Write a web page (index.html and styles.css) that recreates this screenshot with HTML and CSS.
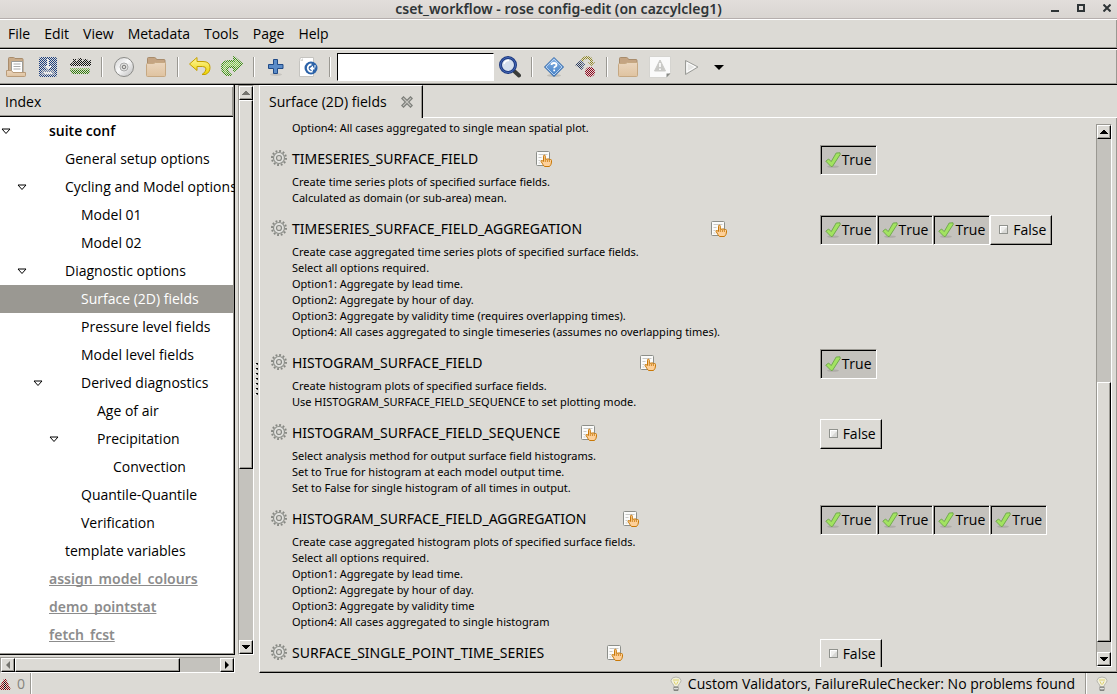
FILE: index.html
```
<!DOCTYPE html>
<html lang="en">
<head>
<meta charset="utf-8">
<title>cset_workflow - rose config-edit (on cazcylcleg1)</title>
<link rel="stylesheet" href="styles.css">
</head>
<body>
<svg class="defs" width="0" height="0" aria-hidden="true">
  <defs>
    <pattern id="dither" width="2" height="2" patternUnits="userSpaceOnUse"><rect width="1" height="1" fill="#dcdad5"/><rect x="1" y="1" width="1" height="1" fill="#dcdad5"/></pattern>
    <linearGradient id="fold" x2="0" y2="1"><stop offset="0" stop-color="#ead5bd"/><stop offset="1" stop-color="#dfc3a0"/></linearGradient>
    <linearGradient id="gold" x2="0" y2="1"><stop offset="0" stop-color="#fff6a0"/><stop offset="1" stop-color="#edd400"/></linearGradient>
    <linearGradient id="blue" x2="0" y2="1"><stop offset="0" stop-color="#8db6e6"/><stop offset="1" stop-color="#3f7dc4"/></linearGradient>
    <linearGradient id="disc" x2="1" y2="1"><stop offset="0" stop-color="#cfcfcf"/><stop offset=".45" stop-color="#fafafa"/><stop offset="1" stop-color="#b9b9b9"/></linearGradient>
  </defs>
  <symbol id="i-folder" viewBox="0 0 22 22">
    <path d="M2.500 18V2.500q0-1 1-1h6q1 0 1.500 1l.5 1h7.500q1 0 1 1V18z" fill="#c4a482" stroke="#a88c6c"/>
    <path d="M1.500 19.500V8.500q0-1 1-1h6l2-1h9q1 0 1 1v12q0 1-1 1h-17q-1 0-1-1z" fill="url(#fold)" stroke="#c6a882"/>
  </symbol>
  <symbol id="i-gear" viewBox="0 0 16 16">
    <circle cx="8" cy="8" r="7" fill="none" stroke="#868883" stroke-width="2" stroke-dasharray="1.830 1.830"/>
    <circle cx="8" cy="8" r="5.500" fill="#e0e0dd" stroke="#8d8f8a" stroke-width="1.200"/>
    <circle cx="8" cy="8" r="2.500" fill="#dcdad5" stroke="#868883" stroke-width="1.200"/>
  </symbol>
  <symbol id="i-hint" viewBox="0 0 16 16">
    <rect x=".5" y=".5" width="13" height="14" rx="1" fill="#fbfbfa" stroke="#8d8f8a"/>
    <path d="M2.500 3.500h9M2.500 6.500h3M2.500 9.500h2M2.500 12h2" stroke="#c9c9c6"/>
    <path d="M8.500 15.500h5q2-2 2-4.500V9.500q0-1-1-1t-1.200.8q-.2-1.600-1.200-1.600t-1.200 1q-.2-1-1.200-1-.4 0-.4.200V5.200q0-1-.9-1t-.9 1V10.500L6 9.500q-1-.2-1 .8l2 3.400z" fill="#fdd09a" stroke="#c87808"/>
    <path d="M9.300 8v3M11.400 9v2M13.400 9.500v1.500" stroke="#c87808" stroke-width=".8"/>
  </symbol>
  <symbol id="i-check" viewBox="0 0 16 16">
    <ellipse cx="8" cy="14.600" rx="6" ry="1.200" fill="#aeaca7"/>
    <path d="M.8 9.200L3.600 7l2.600 2.600L11.200 1l3.800-.2.200 1.600L7.500 14.400 6 14.500z" fill="#a2e360" stroke="#72a850" stroke-linejoin="round"/>
  </symbol>
  <symbol id="i-box" viewBox="0 0 16 16">
    <rect x="4.500" y="3.500" width="8" height="8" fill="#eeeeec" stroke="#90928d"/>
    <rect x="5.500" y="4.500" width="6" height="6" fill="none" stroke="#fff"/>
    <path d="M6 11l6-6v6z" fill="#d8d8d5"/>
  </symbol>
  <symbol id="i-down" viewBox="0 0 8 4"><path d="M0 0h8v1H7v1H6v1H5v1H3V3H2V2H1V1H0z" fill="currentColor"/></symbol>
  <symbol id="i-open" viewBox="0 0 10 7"><path d="M1 1h8L5 5.500z" fill="#fff" stroke="#000"/></symbol>
  <symbol id="i-bulb" viewBox="0 0 12 16">
    <path d="M4 11Q4 9 2.500 7.500 1 6 1 4.500 1.500 1 6 1t5 3.500Q11 6 9.500 7.500 8 9 8 11z" fill="#f3f1dc" stroke="#b5b5ae"/>
    <path d="M3 4h6M4 5.500l1.500 3M8 5.500l-1.500 3" stroke="#dcd06c" fill="none"/>
    <path d="M4 11h4v3.500H4z" fill="#a5a6a2" stroke="#82837f"/><path d="M4 12.500h4" stroke="#dfdfdc"/>
  </symbol>
</svg>

<div class="window">
  <header class="titlebar">
    <h1 class="title">cset_workflow - rose config-edit (on cazcylcleg1)</h1>
    <div class="controls">
      <button class="ctl" aria-label="Minimize"><svg width="8" height="8"><path d="M0 6h8v2H0z" fill="#2e3436"/></svg></button>
      <button class="ctl" aria-label="Maximize"><svg width="8" height="8"><path d="M1 1h6v6H1z" fill="none" stroke="#2e3436" stroke-width="2"/></svg></button>
      <button class="ctl" aria-label="Close"><svg width="8" height="8"><path d="M.5.5l7 7M7.500.5l-7 7" stroke="#2e3436" stroke-width="2"/></svg></button>
    </div>
  </header>

  <nav class="menubar">
    <button class="menu">File</button><button class="menu">Edit</button><button class="menu">View</button><button class="menu">Metadata</button><button class="menu">Tools</button><button class="menu">Page</button><button class="menu">Help</button>
  </nav>

  <div class="toolbar">
    <button class="tool" aria-label="Open"><svg width="22" height="22"><path d="M3.500 17V2.500q0-1 1-1h4q1 0 1.500 1h7q1 0 1 1V17z" fill="#c9ab89" stroke="#a88c6c"/><path d="M6.500 5.500h11v11h-11z" fill="#fff" stroke="#9b9b97"/><path d="M8.500 8h7M8.500 10.500h7M8.500 13h7" stroke="#aaa"/><path d="M1.500 14.500h5l1.500 2h12.500v3q0 1-1 1h-17q-1 0-1-1z" fill="url(#fold)" stroke="#b99b78"/></svg></button>
    <button class="tool" aria-label="Save"><svg width="22" height="22"><rect x="2" y="1" width="18" height="20" rx="2" fill="#1c3f80"/><path d="M5 14h12l1 5H4z" fill="#6f82a8"/><path d="M10 3h2v7h3l-4 4-4-4h3z" fill="#f2f4f8"/><path d="M7 16h8v2H7z" fill="#f2f4f8"/><rect width="22" height="22" fill="url(#dither)"/></svg></button>
    <button class="tool" aria-label="Check and save"><svg width="22" height="22"><path d="M1 10V8l3-2V3h3v3l3-4h3v4l2-3h3l1 2 3-1v6z" fill="#111"/><path d="M1 12h20v2H1z" fill="#7ab050"/><path d="M1 14h20l-1 4H3z" fill="#2f7c08"/><rect width="22" height="22" fill="url(#dither)"/></svg></button>
    <span class="sep"></span>
    <button class="tool" aria-label="Load"><svg width="22" height="22"><circle cx="11" cy="11" r="9.500" fill="url(#disc)" stroke="#8b8b88"/><circle cx="11" cy="11" r="4" fill="#e4e4e2" stroke="#aaa"/><circle cx="11" cy="11" r="1.800" fill="#dcdad5" stroke="#777"/></svg></button>
    <button class="tool" aria-label="Browse"><svg width="22" height="22"><use href="#i-folder"/></svg></button>
    <span class="sep"></span>
    <button class="tool" aria-label="Undo"><svg width="24" height="22"><path d="M1.500 8L9 1.500V5.500h6q7 0 7 6 0 5-4.500 7H14q4-2.500 4-5.500 0-2.500-3.500-2.500H9v4z" fill="url(#gold)" stroke="#c4a000" stroke-linejoin="round"/></svg></button>
    <button class="tool" aria-label="Redo"><svg width="24" height="22"><path d="M22 8L14 1v4H9q-7 0-7 6 0 6 5 8h4q-4-3-4-6 0-2 3-2h4v4z" fill="#7ed048" stroke="#3a9010" stroke-width="2" stroke-linejoin="round"/><rect width="24" height="22" fill="url(#dither)"/></svg></button>
    <span class="sep"></span>
    <button class="tool" aria-label="Add"><svg width="22" height="22"><ellipse cx="11" cy="18.500" rx="6" ry="1.500" fill="#c6c4bf"/><path d="M8.500 3.500h4v5h5.500v4h-5.500v5h-4v-5H3.500v-4h5z" fill="#5b8cc8" stroke="#204a87"/></svg></button>
    <button class="tool" aria-label="Revert"><svg width="22" height="22"><path d="M3.500 1.500h13v19h-14V4.500z" fill="#fff" stroke="#c5c4c0"/><path d="M3 5l3-3v3z" fill="#d5d5d2"/><circle cx="14" cy="12" r="6.500" fill="#2b62a8"/><path d="M14.500 8.500A3.600 3.600 0 1 0 15.500 15.500" fill="none" stroke="#fff" stroke-width="1.800"/><path d="M12.500 12.500l3.500-3v2h2.500V9h-1v4.500H16v2z" fill="#fff"/></svg></button>
    <span class="sep"></span>
    <input class="find" type="text" aria-label="Find">
    <button class="tool" aria-label="Search"><svg width="22" height="22"><path d="M14 14l6 5.500" stroke="#3a3c39" stroke-width="4" stroke-linecap="round"/><circle cx="9" cy="9" r="7.500" fill="#d5e0ee" stroke="#1d3a80" stroke-width="3"/><circle cx="9" cy="9" r="7.500" fill="none" stroke="#4468b8"/><path d="M5 8q1-4 5-3.500" stroke="#fff" stroke-width="1.500" fill="none"/></svg></button>
    <span class="sep"></span>
    <button class="tool" aria-label="Help"><svg width="22" height="22"><ellipse cx="11" cy="19.500" rx="7" ry="1.500" fill="#bfbdb8"/><path d="M11 1.500L20.500 11 11 20.500 1.500 11z" fill="url(#blue)" stroke="#2f66a8" stroke-linejoin="round"/><path d="M11 3L19 11l-8 8-8-8z" fill="none" stroke="#b5d0f0"/><path d="M8.500 9q0-2 2.500-2t2.500 2q0 1-1.500 1.700-.8.500-.8 1.500M11.200 13.500v1.800" fill="none" stroke="#fff" stroke-width="1.800"/></svg></button>
    <button class="tool" aria-label="Graph"><svg width="22" height="22"><path d="M0 9l6-5 4 4-3 6z" fill="#24365c"/><path d="M6 4l4 4-3 6z" fill="#50638a"/><path d="M6 4q2-4 6-4 6 0 6 6h2l-3.500 4L13 6h2q0-3-3-3-3 0-4 3z" fill="#8e8620"/><circle cx="15" cy="16" r="5" fill="#90001a"/><rect width="22" height="22" fill="url(#dither)"/></svg></button>
    <span class="sep narrow"></span>
    <button class="tool" aria-label="Browse output"><svg width="22" height="22"><use href="#i-folder"/></svg></button>
    <button class="tool" aria-label="View output"><svg width="22" height="22"><path d="M.5.5h21v16l-4 5h-17z" fill="#fafafa" stroke="#d5d4d0"/><path d="M17.500 21.500v-4h4z" fill="#888a85"/><path d="M11 4l5.500 11h-11z" fill="#c9c9c6" stroke="#c9c9c6" stroke-linejoin="round"/><path d="M11 7v4M11 12.500v1.500" stroke="#fff" stroke-width="1.600"/></svg></button>
    <button class="tool" aria-label="Run"><svg width="22" height="22"><path d="M4.500 4.500L17 11 4.500 18.500z" fill="#e6e6e4" stroke="#9b9c98" stroke-linejoin="round"/><path d="M6 6.500L14.500 11 6 16z" fill="none" stroke="#fff"/></svg></button>
    <button class="tool slim" aria-label="Run options"><svg width="10" height="5"><path d="M0 0h10L5 5z"/></svg></button>
  </div>

  <main class="body">
    <aside class="side">
      <section class="tree">
        <h2 class="tree-head">Index</h2>
        <ul class="rows">
          <li class="row d0"><svg class="exp" width="10" height="7"><use href="#i-open"/></svg><b class="name">suite conf</b></li>
          <li class="row d1"><span class="name">General setup options</span></li>
          <li class="row d1"><svg class="exp" width="10" height="7"><use href="#i-open"/></svg><span class="name">Cycling and Model options</span></li>
          <li class="row d2"><span class="name">Model 01</span></li>
          <li class="row d2"><span class="name">Model 02</span></li>
          <li class="row d1"><svg class="exp" width="10" height="7"><use href="#i-open"/></svg><span class="name">Diagnostic options</span></li>
          <li class="row d2 selected"><span class="name">Surface (2D) fields</span></li>
          <li class="row d2"><span class="name">Pressure level fields</span></li>
          <li class="row d2"><span class="name">Model level fields</span></li>
          <li class="row d2"><svg class="exp" width="10" height="7"><use href="#i-open"/></svg><span class="name">Derived diagnostics</span></li>
          <li class="row d3"><span class="name">Age of air</span></li>
          <li class="row d3"><svg class="exp" width="10" height="7"><use href="#i-open"/></svg><span class="name">Precipitation</span></li>
          <li class="row d4"><span class="name">Convection</span></li>
          <li class="row d2"><span class="name">Quantile-Quantile</span></li>
          <li class="row d2"><span class="name">Verification</span></li>
          <li class="row d1"><span class="name">template variables</span></li>
          <li class="row d0"><a class="name ignored" href="#assign">assign_model_colours</a></li>
          <li class="row d0"><a class="name ignored" href="#demo">demo_pointstat</a></li>
          <li class="row d0"><a class="name ignored" href="#fetch">fetch_fcst</a></li>
        </ul>
      </section>
      <div class="vbar">
        <button class="arrow off" aria-label="Scroll up"><svg class="up" width="8" height="4"><use href="#i-down"/></svg></button>
        <div class="thumb tree-thumb"></div><div class="gap"></div>
        <button class="arrow" aria-label="Scroll down"><svg width="8" height="4"><use href="#i-down"/></svg></button>
      </div>
      <div class="hbar">
        <button class="arrow off" aria-label="Scroll left"><svg width="4" height="8"><path d="M4 0v8L0 4z" fill="currentColor"/></svg></button>
        <div class="thumb wide-thumb"></div><div class="gap"></div>
        <button class="arrow" aria-label="Scroll right"><svg width="4" height="8"><path d="M0 0v8l4-4z" fill="currentColor"/></svg></button>
      </div>
    </aside>
    <div class="grip"><i></i><i></i><i></i><i></i><i></i><i></i><i></i></div>

    <section class="book">
      <div class="tabs">
        <div class="tab"><span>Surface (2D) fields</span><button class="close" aria-label="Close tab"><svg width="12" height="12"><path d="M2.500 2.500l7 7M9.500 2.500l-7 7" stroke="#7d7f7a" stroke-width="3.600" stroke-linecap="square"/><path d="M2.500 2.500l7 7M9.500 2.500l-7 7" stroke="#c4c3be" stroke-width="1.200" stroke-linecap="square"/></svg></button></div>
        <div class="tab-rest"></div>
      </div>
      <div class="page">
        <div class="view">
          <div class="list">
            <article class="setting cont"><div class="info"><p class="desc">Option4: All cases aggregated to single mean spatial plot.</p></div></article>

            <article class="setting">
              <svg class="gear" width="16" height="16"><use href="#i-gear"/></svg>
              <div class="info w-xs"><h3 class="head">TIMESERIES_SURFACE_FIELD <svg width="16" height="16"><use href="#i-hint"/></svg></h3>
              <p class="desc">Create time series plots of specified surface fields.<br>Calculated as domain (or sub-area) mean.</p></div>
              <div class="vals"><button class="val on" aria-pressed="true"><svg width="16" height="16"><use href="#i-check"/></svg>True</button></div>
            </article>

            <article class="setting">
              <svg class="gear" width="16" height="16"><use href="#i-gear"/></svg>
              <div class="info w-xl"><h3 class="head">TIMESERIES_SURFACE_FIELD_AGGREGATION <svg width="16" height="16"><use href="#i-hint"/></svg></h3>
              <p class="desc">Create case aggregated time series plots of specified surface fields.<br>Select all options required.<br>Option1: Aggregate by lead time.<br>Option2: Aggregate by hour of day.<br>Option3: Aggregate by validity time (requires overlapping times).<br>Option4: All cases aggregated to single timeseries (assumes no overlapping times).</p></div>
              <div class="vals"><button class="val on" aria-pressed="true"><svg width="16" height="16"><use href="#i-check"/></svg>True</button><button class="val on" aria-pressed="true"><svg width="16" height="16"><use href="#i-check"/></svg>True</button><button class="val on" aria-pressed="true"><svg width="16" height="16"><use href="#i-check"/></svg>True</button><button class="val" aria-pressed="false"><svg width="16" height="16"><use href="#i-box"/></svg>False</button></div>
            </article>

            <article class="setting">
              <svg class="gear" width="16" height="16"><use href="#i-gear"/></svg>
              <div class="info w-lg"><h3 class="head">HISTOGRAM_SURFACE_FIELD <svg width="16" height="16"><use href="#i-hint"/></svg></h3>
              <p class="desc">Create histogram plots of specified surface fields.<br>Use HISTOGRAM_SURFACE_FIELD_SEQUENCE to set plotting mode.</p></div>
              <div class="vals"><button class="val on" aria-pressed="true"><svg width="16" height="16"><use href="#i-check"/></svg>True</button></div>
            </article>

            <article class="setting">
              <svg class="gear" width="16" height="16"><use href="#i-gear"/></svg>
              <div class="info w-sm"><h3 class="head">HISTOGRAM_SURFACE_FIELD_SEQUENCE <svg width="16" height="16"><use href="#i-hint"/></svg></h3>
              <p class="desc">Select analysis method for output surface field histograms.<br>Set to True for histogram at each model output time.<br>Set to False for single histogram of all times in output.</p></div>
              <div class="vals"><button class="val" aria-pressed="false"><svg width="16" height="16"><use href="#i-box"/></svg>False</button></div>
            </article>

            <article class="setting">
              <svg class="gear" width="16" height="16"><use href="#i-gear"/></svg>
              <div class="info w-md"><h3 class="head">HISTOGRAM_SURFACE_FIELD_AGGREGATION <svg width="16" height="16"><use href="#i-hint"/></svg></h3>
              <p class="desc">Create case aggregated histogram plots of specified surface fields.<br>Select all options required.<br>Option1: Aggregate by lead time.<br>Option2: Aggregate by hour of day.<br>Option3: Aggregate by validity time<br>Option4: All cases aggregated to single histogram</p></div>
              <div class="vals"><button class="val on" aria-pressed="true"><svg width="16" height="16"><use href="#i-check"/></svg>True</button><button class="val on" aria-pressed="true"><svg width="16" height="16"><use href="#i-check"/></svg>True</button><button class="val on" aria-pressed="true"><svg width="16" height="16"><use href="#i-check"/></svg>True</button><button class="val on" aria-pressed="true"><svg width="16" height="16"><use href="#i-check"/></svg>True</button></div>
            </article>

            <article class="setting">
              <svg class="gear" width="16" height="16"><use href="#i-gear"/></svg>
              <div class="info roomy"><h3 class="head">SURFACE_SINGLE_POINT_TIME_SERIES <svg width="16" height="16"><use href="#i-hint"/></svg></h3></div>
              <div class="vals"><button class="val" aria-pressed="false"><svg width="16" height="16"><use href="#i-box"/></svg>False</button></div>
            </article>
          </div>
        </div>
        <div class="vbar">
          <button class="arrow" aria-label="Scroll up"><svg class="up" width="8" height="4"><use href="#i-down"/></svg></button>
          <div class="gap page-gap"></div><div class="thumb page-thumb"></div><div class="gap"></div>
          <button class="arrow" aria-label="Scroll down"><svg width="8" height="4"><use href="#i-down"/></svg></button>
        </div>
      </div>
    </section>
  </main>

  <footer class="status">
    <div class="errors"><svg width="11" height="14"><path d="M4 2h2l5 11H0V9z" fill="#88000c"/><path d="M4 5h2v7H4z" fill="#200"/><rect width="11" height="14" fill="url(#dither)"/></svg><span>0</span></div>
    <div class="message"><svg width="12" height="16"><use href="#i-bulb"/></svg><span>Custom Validators, FailureRuleChecker: No problems found</span></div>
    <button class="tip" aria-label="Messages"><svg width="12" height="16"><use href="#i-bulb"/></svg></button>
  </footer>
</div>
</body>
</html>
```
FILE: styles.css
```
:root {
  --bg: #dcdad5;
  --dark: #c4c2bd;
  --shade: #9a9892;
}

* { box-sizing: border-box; }

body {
  margin: 0;
  background: var(--bg);
  color: #000;
  font: 14px/20px "Open Sans", "Noto Sans", sans-serif;
}

h1, h2, h3, p, ul { margin: 0; padding: 0; font: inherit; }
ul { list-style: none; }

button {
  margin: 0;
  padding: 0;
  border: 0;
  background: none;
  color: inherit;
  font: inherit;
}

svg { display: block; flex: none; }
.defs { position: absolute; }

.window {
  display: flex;
  flex-direction: column;
  height: 100vh;
  overflow: hidden;
}

.titlebar {
  display: grid;
  grid-template-columns: 1fr auto 1fr;
  flex: none;
  height: 19px;
  border-bottom: 1px solid #b5aead;
  background: linear-gradient(#e2dedb, #d9d5d1);
}

.title {
  grid-column: 2;
  color: #2e3436;
  font-family: "Noto Sans", sans-serif;
  font-weight: 600;
  line-height: 18px;
  white-space: nowrap;
}

.controls {
  display: flex;
  justify-content: flex-end;
  gap: 18px;
  padding: 4px 6px 0 0;
}

.ctl { height: 8px; }

.menubar {
  display: flex;
  flex: none;
  gap: 14px;
  height: 30px;
  padding-left: 8px;
  border-top: 1px solid #fff;
  border-bottom: 1px solid #000;
  box-shadow: inset -1px -1px var(--shade);
}

.toolbar {
  display: flex;
  flex: none;
  align-items: center;
  height: 36px;
  border-top: 1px solid #fff;
  border-bottom: 1px solid #000;
  box-shadow: inset -1px -1px var(--shade);
}

.tool { display: grid; flex: none; place-items: center; width: 32px; height: 32px; }
.slim { width: 22px; }

.sep {
  flex: none;
  width: 2px;
  height: 20px;
  margin: 0 5px;
  border-left: 1px solid var(--shade);
  border-right: 1px solid #fff;
}

.narrow { margin: 0 4px; }

.find {
  flex: none;
  width: 157px;
  height: 28px;
  margin-left: 1px;
  padding: 0 4px;
  border: 1px solid;
  border-color: #000 #fff #fff #000;
  background: #fff;
  font: inherit;
}

.body { display: flex; flex: 1; min-height: 0; }

.side {
  display: grid;
  flex: none;
  grid-template: minmax(0, 1fr) 16px / 235px 16px;
  gap: 2px 3px;
}

.tree {
  overflow: hidden;
  border-right: 1px solid #000;
  border-bottom: 1px solid #000;
  background: #fff;
  box-shadow: inset -1px -1px var(--shade);
}

.tree-head {
  height: 32px;
  margin-right: 1px;
  padding: 5px 5px 0;
  border-top: 2px solid #fff;
  border-bottom: 1px solid #000;
  background: var(--bg);
  box-shadow: inset -1px -1px var(--shade);
}

.rows { margin-right: 1px; }

.row {
  display: grid;
  grid-template-columns: 48px auto;
  align-items: center;
  justify-content: start;
  height: 28px;
  padding-left: 1px;
  white-space: nowrap;
}

.d1 { padding-left: 17px; }
.d2 { padding-left: 33px; }
.d3 { padding-left: 49px; }
.d4 { padding-left: 65px; }
.name { grid-column: 2; }
b.name, .ignored { font-weight: 600; }

.ignored {
  color: #8c8c8c;
  font-family: "Noto Sans", sans-serif;
  text-decoration-skip-ink: none;
}

.selected { background: #9a9892; color: #fff; }

.vbar {
  display: flex;
  flex: none;
  flex-direction: column;
  width: 16px;
  border: 1px solid;
  border-color: var(--shade) #fff #fff var(--shade);
  background: var(--dark);
}

.hbar {
  display: flex;
  border: 1px solid;
  border-color: var(--shade) #fff #fff var(--shade);
  background: var(--dark);
}

.arrow, .thumb {
  border: 1px solid;
  border-color: #fff #000 #000 #fff;
  background: var(--bg);
  box-shadow: inset -1px -1px var(--shade);
}

.arrow { display: grid; flex: none; place-items: center; width: 14px; height: 14px; }
.off { color: #75746f; }
.up { transform: rotate(180deg); }
.gap { flex: 1; }
.tree-thumb { flex: 0 0 65%; }
.wide-thumb { flex: 0 0 71%; }
.page-gap { flex: 0 0 45%; }
.page-thumb { flex: 0 0 48%; }

.grip {
  display: flex;
  flex: none;
  flex-direction: column;
  justify-content: center;
  align-items: center;
  gap: 3px;
  width: 5px;
}

.grip i { width: 3px; height: 2px; border-right: 2px solid #000; border-bottom: 1px solid #fff; }

.book { display: flex; flex: 1; flex-direction: column; min-width: 0; }
.tabs { display: flex; flex: none; height: 33px; }

.tab {
  display: flex;
  align-items: center;
  gap: 14px;
  padding: 0 9px;
  border-left: 1px solid #fff;
  border-right: 1px solid #000;
  border-top: 1px solid #fff;
  box-shadow: inset -1px 0 var(--shade);
}

.close { height: 12px; }
.tab-rest { flex: 1; border-bottom: 1px solid #fff; }

.page {
  display: flex;
  flex: 1;
  min-height: 0;
  padding: 6px 5px 5px 11px;
  border-left: 1px solid #fff;
  border-bottom: 1px solid #000;
  box-shadow: inset -1px -1px var(--shade);
}

.view { flex: 1; min-width: 0; overflow: hidden; }
.list { margin-top: -4px; }

.setting {
  display: grid;
  grid-template-columns: 21px minmax(0, 21fr) minmax(0, 11fr);
  padding-bottom: 8px;
}

.gear { margin-top: 6px; }
.info { grid-column: 2; justify-self: start; white-space: nowrap; }
.w-xs { min-width: 265px; }
.w-sm { min-width: 310px; }
.roomy { min-width: 336px; }
.w-md { min-width: 352px; }
.w-lg { min-width: 369px; }
.w-xl { min-width: 440px; }

.head {
  display: flex;
  align-items: center;
  justify-content: space-between;
  gap: 8px;
  height: 30px;
  padding-right: 5px;
  font-family: "Noto Sans", sans-serif;
}

.desc { font: 11px/16px "Noto Sans", sans-serif; }
.vals { display: flex; padding-top: 1px; }

.val {
  display: flex;
  flex: none;
  align-items: center;
  gap: 2px;
  height: 30px;
  padding: 0 5px 0 4px;
  border: 1px solid;
  border-color: #fff #000 #000 #fff;
  box-shadow: inset -1px -1px var(--shade);
}

.on {
  gap: 1px;
  padding-right: 4px;
  border-color: var(--shade) #fff #fff var(--shade);
  background: var(--dark);
  box-shadow: inset 1px 1px #000;
}

.status { display: flex; flex: none; align-items: stretch; height: 21px; }

.errors {
  display: flex;
  align-items: center;
  gap: 6px;
  width: 32px;
  border-right: 1px solid #fff;
  color: #85847e;
  box-shadow: inset -1px 0 var(--shade);
}

.message {
  display: flex;
  flex: 1;
  align-items: center;
  justify-content: flex-end;
  gap: 6px;
  padding-right: 10px;
  white-space: nowrap;
}

.tip {
  display: grid;
  place-items: center;
  width: 32px;
  border-left: 1px solid var(--shade);
  box-shadow: inset 1px 0 #fff;
}
```
